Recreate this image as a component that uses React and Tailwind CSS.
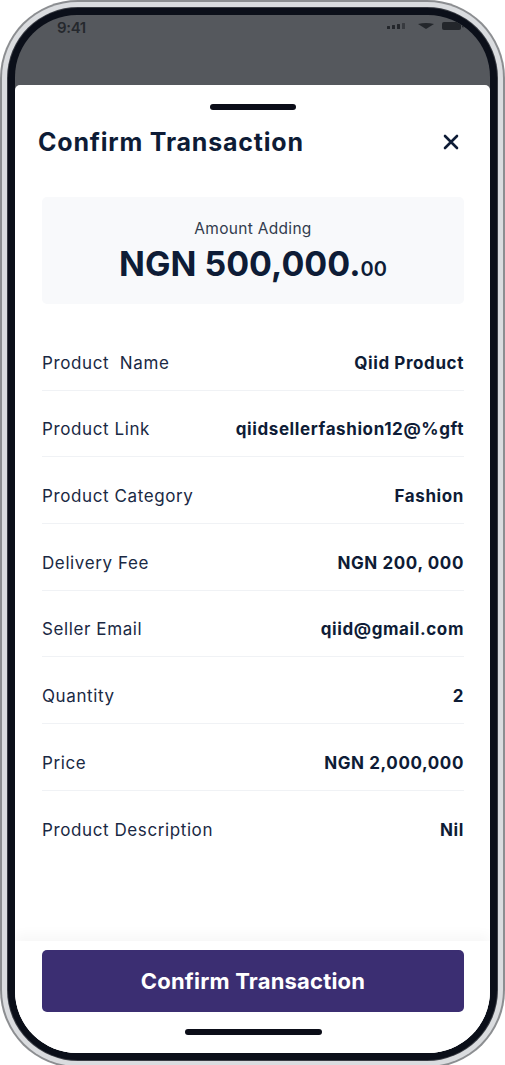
import React from "react";

const rows = [
  ["Product  Name", "Qiid Product"],
  ["Product Link", "qiidsellerfashion12@%gft"],
  ["Product Category", "Fashion"],
  ["Delivery Fee", "NGN 200, 000"],
  ["Seller Email", "qiid@gmail.com"],
  ["Quantity", "2"],
  ["Price", "NGN 2,000,000"],
  ["Product Description", "Nil"],
];

function StatusIcons() {
  return (
    <div className="flex items-center text-[#23262b]">
      <svg width="20" height="6" viewBox="0 0 20 6" fill="currentColor">
        <rect x="0" y="3" width="3" height="3" rx="0.5" />
        <rect x="5" y="2" width="3" height="4" rx="0.5" />
        <rect x="10" y="1" width="3" height="5" rx="0.5" />
        <rect x="15" y="0" width="3" height="6" rx="0.5" opacity="0.6" />
      </svg>
      <svg className="ml-[11px]" width="16" height="6" viewBox="0 0 16 6" fill="currentColor">
        <path d="M0 1 Q8 -1 16 1 L8 6 Z" />
      </svg>
      <svg className="ml-[8px]" width="22" height="8" viewBox="0 0 22 8" fill="currentColor">
        <rect x="0" y="0" width="19" height="8" rx="2" />
        <rect x="20" y="2.5" width="2" height="3" rx="1" />
      </svg>
    </div>
  );
}

export default function App() {
  return (
    <div className="w-[505px] h-[1065px] overflow-hidden bg-white" style={{ fontFamily: "Inter, 'Noto Sans', sans-serif" }}>
      {/* phone frame */}
      <div className="w-[505px] h-[1068px] rounded-[78px] bg-[#8c8e91] p-[2px]">
        <div className="w-full h-full rounded-[76px] bg-[#dadcdf] p-[5px]">
          <div className="w-full h-full rounded-[71px] bg-[#3a3d44] p-[1px]">
            <div className="w-full h-full rounded-[70px] bg-[#0b0f19] p-[7px]">
              <div className="w-full h-full rounded-[62px] overflow-hidden bg-[#55585d] flex flex-col">
                {/* status bar */}
                <div className="h-[70px] shrink-0 flex justify-between pl-[42px] pr-[26px] pt-[2px]">
                  <span className="text-[15px] font-semibold text-[#25282d] tracking-tight">9:41</span>
                  <div className="pt-[5px]">
                    <StatusIcons />
                  </div>
                </div>

                {/* sheet */}
                <div className="flex-1 bg-white rounded-t-[5px] flex flex-col">
                  <div className="flex justify-center pt-[19px]">
                    <div className="w-[86px] h-[6px] rounded-full bg-[#0b0d18]" />
                  </div>

                  <div className="flex items-center justify-between pl-[23px] pr-[31px] mt-[17px]">
                    <h1 className="text-[25px] leading-[30px] font-bold text-[#0e1c36] tracking-[0.8px]">Confirm Transaction</h1>
                    <svg width="16" height="16" viewBox="0 0 16 16" fill="none" stroke="#0e1c36" strokeWidth="2.6" strokeLinecap="round">
                      <path d="M2 2L14 14M14 2L2 14" />
                    </svg>
                  </div>

                  <div className="px-[27px] pr-[26px]">
                    <div className="mt-[40px] h-[107px] pt-[6px] rounded-[5px] bg-[#f8f9fb] flex flex-col items-center justify-center">
                      <p className="text-[15.5px] leading-[20px] text-[#323c4e] tracking-[0.3px]">Amount Adding</p>
                      <p className="mt-[5px] text-[34px] leading-[40px] font-bold text-[#0e1c36]">
                        NGN 500,000.<span className="text-[20px] font-semibold">00</span>
                      </p>
                    </div>

                    <div className="mt-[20px]">
                      {rows.map(([label, value], i) => (
                        <div
                          key={label}
                          className={`flex items-center justify-between pt-[28.7px] pb-[17px] ${i < rows.length - 1 ? "border-b border-[#f0f2f5]" : ""}`}
                        >
                          <span className="text-[17px] leading-[20px] text-[#1a2944] whitespace-pre tracking-[0.6px]">{label}</span>
                          <span className="text-[17px] leading-[20px] font-bold text-[#0e1c36] tracking-[0.6px]">{value}</span>
                        </div>
                      ))}
                    </div>
                  </div>

                  <div className="flex-1" />

                  {/* footer */}
                  <div className="bg-white shadow-[0_-6px_12px_rgba(15,23,42,0.035)] pt-[9px] px-[27px] pr-[26px] flex flex-col items-center">
                    <button className="w-full h-[62px] rounded-[5px] bg-[#3b2e72] text-white text-[22px] font-bold tracking-[0.2px]">
                      Confirm Transaction
                    </button>
                    <div className="mt-[17px] mb-[18px] w-[137px] h-[6px] rounded-full bg-[#0b0d18]" />
                  </div>
                </div>
              </div>
            </div>
          </div>
        </div>
      </div>
    </div>
  );
}
